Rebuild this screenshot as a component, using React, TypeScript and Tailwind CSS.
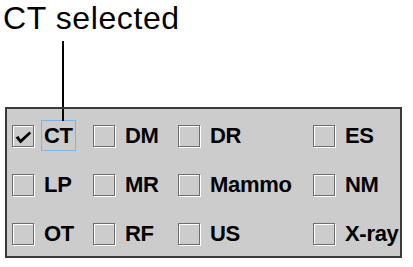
import React from "react";

type Item = { label: string; checked?: boolean; focused?: boolean };

const rows: Item[][] = [
  [{ label: "CT", checked: true, focused: true }, { label: "DM" }, { label: "DR" }, { label: "ES" }],
  [{ label: "LP" }, { label: "MR" }, { label: "Mammo" }, { label: "NM" }],
  [{ label: "OT" }, { label: "RF" }, { label: "US" }, { label: "X-ray" }],
];

function Box({ checked }: { checked?: boolean }) {
  return (
    <div className="relative h-[22px] w-[22px] shrink-0 border border-[#6e6e6e] shadow-[1px_1px_0_#ffffff,inset_1px_1px_0_#ffffff]">
      {checked && (
        <svg viewBox="0 0 22 22" className="absolute left-[-1px] top-[-1px] h-[22px] w-[22px]">
          <polygon points="3.5,12.5 6.5,11 8.5,14.5 17.5,6.5 19,8.5 8.5,18.5" fill="#000" />
        </svg>
      )}
    </div>
  );
}

function Check({ item }: { item: Item }) {
  return (
    <div className="flex items-center gap-[7px] whitespace-nowrap">
      <Box checked={item.checked} />
      <span
        className={
          item.focused
            ? "relative border border-[#78b6ea] px-[2px] py-[2px] text-[22px] leading-[25px] font-bold tracking-[-0.3px] text-black"
            : "relative border border-transparent px-[2px] py-[2px] text-[22px] leading-[25px] font-bold tracking-[-0.3px] text-black"
        }
      >
        {item.focused && <span className="absolute bottom-full left-[20px] h-[12px] w-[2px] bg-black" />}
        {item.label}
      </span>
    </div>
  );
}

export default function App() {
  return (
    <div className="h-[267px] w-[413px] overflow-hidden bg-white font-['Liberation_Sans',Arial,sans-serif]">
      <div className="h-[41px] whitespace-nowrap pl-[3px] pt-[2px] text-[32px] leading-[32px] tracking-[0.6px] text-black">
        CT selected
      </div>
      <div className="ml-[62px] h-[66px] w-[2px] bg-black" />
      <div className="ml-[5px] w-[397px] overflow-hidden border-2 border-[#3a3a3a] bg-[#cccccc] pb-[7px] pl-[5px] pt-[11px]">
        <div className="grid grid-cols-[81px_85px_135px_auto] gap-y-[18px]">
          {rows.flat().map((item) => (
            <Check key={item.label} item={item} />
          ))}
        </div>
      </div>
    </div>
  );
}
